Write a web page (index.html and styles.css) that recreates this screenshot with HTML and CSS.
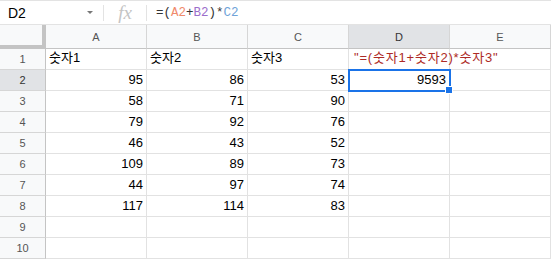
FILE: index.html
```html
<!DOCTYPE html>
<html lang="ko">
<head>
  <meta charset="UTF-8" />
  <title>Sheet</title>
  <link rel="stylesheet" href="styles.css">
</head>
<body>
  <div class="formula-bar">
    <div class="name-box">D2 <span class="arrow"></span></div>
    <div class="fx">fx</div>
    <div class="formula">=(<span class="ref-a">A2</span>+<span class="ref-b">B2</span>)*<span class="ref-c">C2</span></div>
  </div>

  <div class="sheet">
    <div class="corner"></div>
    <div class="col-head">A</div>
    <div class="col-head">B</div>
    <div class="col-head">C</div>
    <div class="col-head active">D</div>
    <div class="col-head">E</div>

    <div class="row-head">1</div>
    <div class="cell">숫자1</div>
    <div class="cell">숫자2</div>
    <div class="cell">숫자3</div>
    <div class="cell text-red">"=(숫자1+숫자2)*숫자3"</div>
    <div class="cell"></div>

    <div class="row-head active">2</div>
    <div class="cell num">95</div>
    <div class="cell num">86</div>
    <div class="cell num">53</div>
    <div class="cell num selected">9593</div>
    <div class="cell"></div>

    <div class="row-head">3</div>
    <div class="cell num">58</div>
    <div class="cell num">71</div>
    <div class="cell num">90</div>
    <div class="cell"></div>
    <div class="cell"></div>

    <div class="row-head">4</div>
    <div class="cell num">79</div>
    <div class="cell num">92</div>
    <div class="cell num">76</div>
    <div class="cell"></div>
    <div class="cell"></div>

    <div class="row-head">5</div>
    <div class="cell num">46</div>
    <div class="cell num">43</div>
    <div class="cell num">52</div>
    <div class="cell"></div>
    <div class="cell"></div>

    <div class="row-head">6</div>
    <div class="cell num">109</div>
    <div class="cell num">89</div>
    <div class="cell num">73</div>
    <div class="cell"></div>
    <div class="cell"></div>

    <div class="row-head">7</div>
    <div class="cell num">44</div>
    <div class="cell num">97</div>
    <div class="cell num">74</div>
    <div class="cell"></div>
    <div class="cell"></div>

    <div class="row-head">8</div>
    <div class="cell num">117</div>
    <div class="cell num">114</div>
    <div class="cell num">83</div>
    <div class="cell"></div>
    <div class="cell"></div>

    <div class="row-head">9</div>
    <div class="cell"></div>
    <div class="cell"></div>
    <div class="cell"></div>
    <div class="cell"></div>
    <div class="cell"></div>

    <div class="row-head">10</div>
    <div class="cell"></div>
    <div class="cell"></div>
    <div class="cell"></div>
    <div class="cell"></div>
    <div class="cell"></div>
  </div>
</body>
</html>
```

FILE: styles.css
```css
body { margin: 0; background: #fff; font-family: "Liberation Sans", Arial, "Noto Sans CJK KR", sans-serif; color: #000; overflow: hidden; }

/* formula bar */
.formula-bar { display: flex; align-items: center; height: 25px; box-sizing: border-box; border-top: 1px solid #e3e3e3; border-bottom: 1px solid #e3e3e3; }
.name-box { width: 104px; padding-left: 8px; font-size: 14px; display: flex; align-items: center; box-sizing: border-box; border-right: 1px solid #e3e3e3; height: 16px; }
.arrow { margin-left: auto; margin-right: 10px; width: 0; height: 0; border-left: 3px solid transparent; border-right: 3px solid transparent; border-top: 3px solid #777; }
.fx { width: 42px; text-align: center; font-family: "Liberation Serif", serif; font-style: italic; font-size: 19px; color: #c4c4c4; border-right: 1px solid #e3e3e3; height: 16px; line-height: 16px; }
.formula { padding-left: 9px; font-family: "Liberation Mono", monospace; font-size: 12.5px; color: #333; }
.ref-a { color: #f08a6c; }
.ref-b { color: #9b6ecb; }
.ref-c { color: #6fa3d8; }

/* grid */
.sheet { display: grid; grid-template-columns: 46px repeat(5, 101px); grid-template-rows: 24px repeat(10, 21px); }
.sheet > div { box-sizing: border-box; border-right: 1px solid #e2e2e2; border-bottom: 1px solid #e2e2e2; }
.corner { background: #f8f9fa; border-right: 4px solid #c4c4c4 !important; border-bottom: 4px solid #c4c4c4 !important; }
.col-head { background: #f8f9fa; color: #555; font-size: 11px; display: flex; align-items: center; justify-content: center; border-bottom-color: #c4c4c4 !important; border-right-color: #d6d6d6 !important; }
.row-head { background: #f8f9fa; color: #555; font-size: 11px; display: flex; align-items: center; justify-content: center; border-right-color: #c4c4c4 !important; border-bottom-color: #d6d6d6 !important; }
.col-head.active, .row-head.active { background: #e1e3e6; color: #333; }
.cell { font-size: 13px; display: flex; align-items: flex-end; padding: 0 3px 3px; white-space: nowrap; position: relative; }
.num { justify-content: flex-end; }
.text-red { color: #ad2a26; overflow: visible; z-index: 1; letter-spacing: 0.8px; padding-left: 5px; }
.selected { outline: 2px solid #1a73e8; outline-offset: -1px; z-index: 2; }
.selected::after { content: ""; position: absolute; right: -4px; bottom: -4px; width: 6px; height: 6px; background: #1a73e8; border: 1px solid #fff; }
```
